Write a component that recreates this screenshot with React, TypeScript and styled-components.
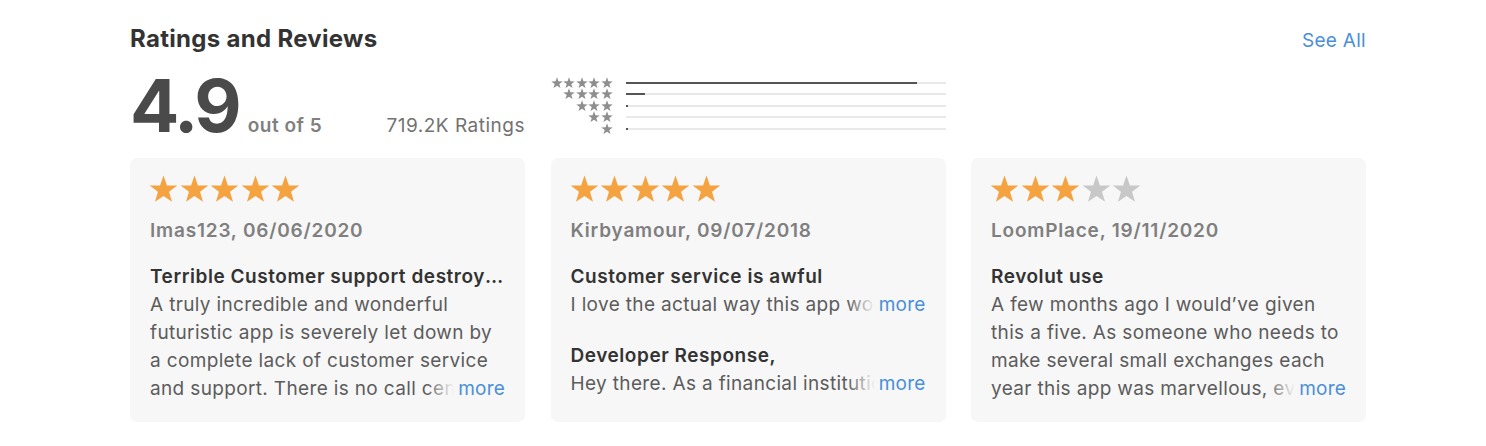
import React from "react";
import styled, { createGlobalStyle } from "styled-components";

const GlobalStyle = createGlobalStyle`
  html, body { margin: 0; padding: 0; background: #ffffff; }
  body { font-family: Inter, "Liberation Sans", Arial, sans-serif; -webkit-font-smoothing: antialiased; }
`;

const CARD_BG = "#f7f7f7";
const LINK = "#4a8fd9";

const Page = styled.div`
  width: 1236px;
  padding: 24px 0 0 130px;
`;

const Header = styled.div`
  display: flex;
  justify-content: space-between;
  align-items: baseline;
`;

const Title = styled.h2`
  margin: 0;
  font-size: 24px;
  line-height: 30px;
  font-weight: 700;
  color: #333333;
  letter-spacing: 0.3px;
`;

const SeeAll = styled.a`
  font-size: 19px;
  color: ${LINK};
  text-decoration: none;
  letter-spacing: 0.3px;
`;

const Columns = styled.div`
  display: grid;
  grid-template-columns: repeat(3, 395px);
  column-gap: 25.5px;
`;

const Summary = styled(Columns)`
  margin-top: 13px;
  height: 91px;
`;

const ScoreBlock = styled.div`
  display: flex;
  align-items: baseline;
  padding-top: 3px;
`;

const Score = styled.span`
  font-size: 73px;
  line-height: 72px;
  font-weight: 700;
  color: #4a4a4a;
  letter-spacing: -3px;
`;

const OutOf = styled.span`
  margin-left: 9px;
  font-size: 19px;
  font-weight: 600;
  color: #808080;
  letter-spacing: 0.5px;
`;

const Count = styled.span`
  margin-left: auto;
  font-size: 19px;
  color: #727272;
  letter-spacing: 0.5px;
`;

const Histogram = styled.div`
  display: flex;
  flex-direction: column;
  padding-top: 10px;
`;

const HistRow = styled.div`
  display: flex;
  align-items: center;
  height: 11.5px;
`;

const HistStars = styled.div`
  width: 62px;
  display: flex;
  justify-content: flex-end;
  gap: 0.5px;
`;

const Track = styled.div`
  margin-left: 13px;
  flex: 1;
  height: 2px;
  background: #e9e9e9;
`;

const Fill = styled.div`
  height: 100%;
  background: #555555;
`;

const Cards = styled(Columns)``;

const Card = styled.div`
  background: ${CARD_BG};
  border-radius: 7px;
  height: 264px;
  box-sizing: border-box;
  padding: 16px 20px 0 20px;
`;

const StarRow = styled.div`
  display: flex;
  gap: 1.5px;
  height: 30px;
  align-items: center;
  margin-left: -1px;
`;

const Reviewer = styled.div`
  margin-top: 13px;
  font-size: 19px;
  line-height: 28px;
  font-weight: 600;
  color: #7f7f7f;
  letter-spacing: 0.8px;
`;

const ReviewTitle = styled.div<{ $gap: number }>`
  margin-top: ${(p) => p.$gap}px;
  font-size: 19px;
  line-height: 28px;
  font-weight: 600;
  color: #333333;
  letter-spacing: 0.55px;
  white-space: nowrap;
  overflow: hidden;
  text-overflow: ellipsis;
`;

const BodyWrap = styled.div<{ $lines: number }>`
  position: relative;
  font-size: 19px;
  line-height: 28px;
  color: #5c5c5c;
  letter-spacing: 0.35px;
  max-height: ${(p) => p.$lines * 28}px;
  overflow: hidden;
`;

const More = styled.span`
  position: absolute;
  right: 0;
  bottom: 0;
  line-height: 28px;
  padding-left: 32px;
  color: ${LINK};
  letter-spacing: 0.2px;
  background: linear-gradient(to right, rgba(247, 247, 247, 0) 0, ${CARD_BG} 28px);
`;

function starPoints(cx: number, cy: number, R: number, r: number) {
  const pts: string[] = [];
  for (let i = 0; i < 10; i++) {
    const rad = i % 2 === 0 ? R : r;
    const a = -Math.PI / 2 + (i * Math.PI) / 5;
    pts.push(`${(cx + rad * Math.cos(a)).toFixed(2)},${(cy + rad * Math.sin(a)).toFixed(2)}`);
  }
  return pts.join(" ");
}

const STAR = starPoints(50, 52, 50, 20);

const Star = ({ size, color }: { size: number; color: string }) => (
  <svg width={size} height={size} viewBox="0 0 100 100" aria-hidden="true">
    <polygon points={STAR} fill={color} />
  </svg>
);

const hist = [91, 6, 0.6, 0, 0.6];

type Review = {
  rating: number;
  author: string;
  title: string;
  body: string;
  lines: number;
  response?: { title: string; body: string };
};

const reviews: Review[] = [
  {
    rating: 5,
    author: "Imas123, 06/06/2020",
    title: "Terrible Customer support destroys the whole experience",
    body:
      "A truly incredible and wonderful futuristic app is severely let down by a complete lack of customer service and support. There is no call centre and the in-app chat is painfully slow to respond to anything at all.",
    lines: 4,
  },
  {
    rating: 5,
    author: "Kirbyamour, 09/07/2018",
    title: "Customer service is awful",
    body: "I love the actual way this app works and all of the features it has.",
    lines: 1,
    response: {
      title: "Developer Response,",
      body: "Hey there. As a financial institution we are required to verify.",
    },
  },
  {
    rating: 3,
    author: "LoomPlace, 19/11/2020",
    title: "Revolut use",
    body:
      "A few months ago I would\u2019ve given this a five. As someone who needs to make several small exchanges each year this app was marvellous, every single time I travelled abroad it saved me money.",
    lines: 4,
  },
];

export default function App() {
  return (
    <>
      <GlobalStyle />
      <Page>
        <Header>
          <Title>Ratings and Reviews</Title>
          <SeeAll href="#">See All</SeeAll>
        </Header>
        <Summary>
          <ScoreBlock>
            <Score>4.9</Score>
            <OutOf>out of 5</OutOf>
            <Count>719.2K Ratings</Count>
          </ScoreBlock>
          <Histogram>
            {hist.map((pct, i) => (
              <HistRow key={i}>
                <HistStars>
                  {Array.from({ length: 5 - i }).map((_, j) => (
                    <Star key={j} size={12} color="#8e8e8e" />
                  ))}
                </HistStars>
                <Track>
                  <Fill style={{ width: `${pct}%`, minWidth: pct > 0 ? 2 : 0 }} />
                </Track>
              </HistRow>
            ))}
          </Histogram>
          <div />
        </Summary>
        <Cards>
          {reviews.map((r) => (
            <Card key={r.author}>
              <StarRow>
                {Array.from({ length: 5 }).map((_, j) => (
                  <Star key={j} size={29} color={j < r.rating ? "#f4a340" : "#c8c8c8"} />
                ))}
              </StarRow>
              <Reviewer>{r.author}</Reviewer>
              <ReviewTitle $gap={18}>{r.title}</ReviewTitle>
              <BodyWrap $lines={r.lines}>
                {r.body}
                <More>more</More>
              </BodyWrap>
              {r.response && (
                <>
                  <ReviewTitle $gap={23}>{r.response.title}</ReviewTitle>
                  <BodyWrap $lines={1}>
                    {r.response.body}
                    <More>more</More>
                  </BodyWrap>
                </>
              )}
            </Card>
          ))}
        </Cards>
      </Page>
    </>
  );
}
